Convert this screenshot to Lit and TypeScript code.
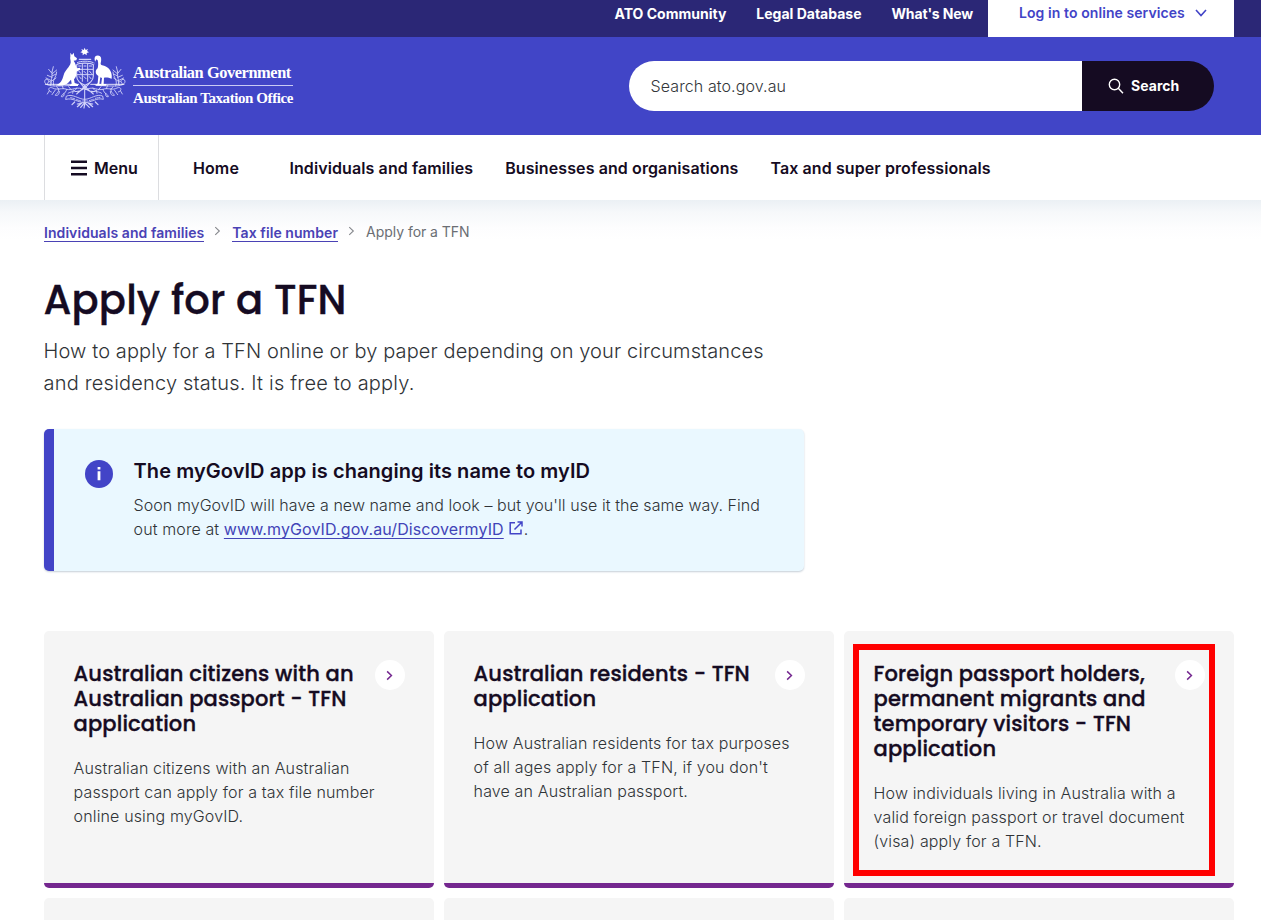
import { LitElement, html, css, svg } from "lit";
import { customElement } from "lit/decorators.js";

interface Card {
  title: string[];
  body: string[];
  boxed?: boolean;
}

const cards: Card[] = [
  {
    title: ["Australian citizens with an", "Australian passport - TFN", "application"],
    body: ["Australian citizens with an Australian", "passport can apply for a tax file number", "online using myGovID."],
  },
  {
    title: ["Australian residents - TFN", "application"],
    body: ["How Australian residents for tax purposes", "of all ages apply for a TFN, if you don't", "have an Australian passport."],
  },
  {
    title: ["Foreign passport holders,", "permanent migrants and", "temporary visitors - TFN", "application"],
    body: ["How individuals living in Australia with a", "valid foreign passport or travel document", "(visa) apply for a TFN."],
    boxed: true,
  },
];

const sprig = svg`
  <path d="M104 122C84 126 64 126 46 126C28 126 14 122 14 112C14 104 26 104 26 112M32 124C32 108 38 100 36 84M36 100L22 94M36 96L48 90M34 86L26 76M36 84L40 68M36 90L50 78M34 110L18 102M34 112L48 102M42 126C34 108 50 100 50 84M22 122C22 110 34 110 34 118" />
  <path d="M124 134C108 128 96 140 80 136C66 130 52 140 38 132C24 126 22 142 34 144M110 132C104 146 90 142 84 148M80 136C76 152 66 148 64 158C70 160 74 154 72 148M56 134C58 146 48 148 46 154C54 156 58 150 58 142M46 138L36 152M94 138L86 128M70 134L66 124M56 136L50 128M100 138L98 148M28 140L22 150" />
`;

const crest = html`
  <svg class="crest" viewBox="0 0 270 210" fill="none" stroke="#d3d4fa" stroke-width="2.6" stroke-linecap="round">
    ${sprig}
    <g transform="translate(269 0) scale(-1 1)">${sprig}</g>
    <path d="M134 124C126 140 120 140 110 150M134 124C144 140 150 140 160 150M134 126V184M122 118C132 132 148 146 166 142M148 118C136 132 122 146 104 142" stroke-width="3.2" />
    <path d="M80 156C98 148 116 166 134 166C152 166 170 148 188 156L190 166C170 160 154 176 134 176C114 176 98 160 78 166Z" />
    <path d="M92 161L104 164M110 167L122 171M128 171H142M148 170L160 166M166 163L180 160" stroke-dasharray="3 3" />
    <path d="M134 176L122 190M134 176L148 190M112 180L124 178L112 188M158 180L146 178L158 188M134 180L132 192M104 174L96 182M166 174L174 182" stroke-width="3.6" />
    <path d="M110 62C118 56 150 56 160 62V96C160 112 148 118 135 124C122 118 110 112 110 96Z" stroke-width="3.4" />
    <path d="M112 76H158M112 92H158M127 60V112M143 60V112M116 66H123M132 66H138M148 66H155M117 82L122 88M132 82L138 88M149 82L154 88M132 98L138 104M118 98L123 104M148 98L153 104M112 56C120 50 150 50 160 56" stroke-width="3" />
    <path d="M134 11L137 18L144 15L141 21L147 25L140 27L140 34L134 29L128 34L128 27L121 25L127 21L124 15L131 18Z" fill="#fff" stroke="none" />
    <path d="M118 46H152" stroke-width="4" stroke-dasharray="4 2" />
    <path d="M91 26L96 33L101 26L103 37L111 43L109 49L101 50C107 58 107 65 111 73L120 71L121 77L109 83C110 92 108 100 102 106L104 117L114 121V126H87L95 119L93 107L84 117C76 124 62 127 45 124C63 120 67 107 71 93C76 76 89 70 92 56C93 49 89 43 91 38Z" fill="#fff" stroke="none" />
    <path d="M161 66C165 57 167 55 164 48C162 38 168 34 176 35C186 36 184 50 182 58C181 65 189 63 200 69C213 77 217 91 215 104C206 101 200 99 192 101L191 120H199V125H183L186 102L181 100L178 120H183V125H166L173 118L175 96C165 90 165 79 173 73C175 65 175 56 173 49L169 46L166 52Z" fill="#fff" stroke="none" />
    <path d="M16 121H116M152 121H252" stroke="#fff" stroke-width="2.500" />
  </svg>
`;

const chevron = html`<svg class="chev" viewBox="0 0 8 12"><path d="M1.300 1.300L6.200 6L1.300 10.700" /></svg>`;

@customElement("app-root")
export class AppRoot extends LitElement {
  static styles = css`
    :host {
      display: block;
      height: 920px;
      overflow: hidden;
      background: #fff;
      color: #2f3337;
      font: 300 16px/24px Inter, "Noto Sans", sans-serif;
    }
    * { box-sizing: border-box; }
    h1, h2, h3, p { margin: 0; }
    a { color: inherit; text-decoration: none; }
    svg { display: block; flex: none; }
    .line { display: block; white-space: nowrap; }

    .top { display: flex; justify-content: flex-end; height: 37px; background: #2b2776; padding-right: 27px; color: #fff; font: 700 14px/28px Inter, sans-serif; }
    .links { display: flex; gap: 30px; padding-right: 15px; }
    .links a { white-space: nowrap; }
    .links a:last-child { letter-spacing: -0.15px; }
    .login { display: flex; width: 246px; padding-left: 31px; background: #fff; color: #4244c7; line-height: 26px; font-weight: 600; font-size: 14px; letter-spacing: 0.08px; white-space: nowrap; }
    .login svg { margin: 9px 0 0 10px; width: 12px; height: 8px; fill: none; stroke: #4244c7; stroke-width: 1.600; }

    .head { display: flex; justify-content: space-between; height: 98px; background: #4145c7; padding: 0 47px 0 40px; }
    .brand { display: flex; }
    .crest { width: 90px; height: 70px; margin-top: 7px; }
    .names { margin: 24px 0 0 3px; width: 160px; color: #fff; font: 700 16.400px/23px "Liberation Serif", serif; white-space: nowrap; }
    .gov { height: 25px; border-bottom: 1px solid #c9caf4; letter-spacing: -0.44px; }
    .office { line-height: 25px; font-size: 15px; letter-spacing: -0.42px; }
    .search { display: flex; width: 585px; height: 50px; margin-top: 24px; border-radius: 25px; overflow: hidden; }
    .field { flex: 1; background: #fff; padding-left: 21.500px; line-height: 50px; color: #33363a; letter-spacing: 0.1px; }
    .go { display: flex; align-items: center; width: 132px; padding-left: 26px; gap: 7px; background: #150b22; color: #fff; font-weight: 700; font-size: 14px; letter-spacing: 0.05px; }
    .go svg { width: 16px; height: 16px; fill: none; stroke: #fff; stroke-width: 1.400; }

    .nav { display: flex; height: 65px; padding-left: 44px; color: #150b22; font: 600 16px/66px Inter, sans-serif; letter-spacing: 0.1px; white-space: nowrap; }
    .menu { display: flex; width: 115px; border: solid #dcdde0; border-width: 0 1px; padding-left: 26px; gap: 7px; letter-spacing: 0; }
    .menu svg { width: 16px; height: 16px; margin-top: 25px; fill: #150b22; }
    .home { margin: 0 50.500px 0 34px; }
    .fam { margin-right: 32px; }
    .biz { margin-right: 32px; }

    .page { height: 720px; padding: 0 27px 0 44px; background: linear-gradient(#ebf0f4, #f6f8fa 12px, #fdfdfe 28px, #fff 40px); }
    .crumbs { display: flex; padding-top: 21px; height: 44px; font-size: 14px; line-height: 22px; white-space: nowrap; color: #6b6e73; font-weight: 400; letter-spacing: -0.04px; }
    .crumbs a { height: 20px; margin-top: 1px; color: #4a42b5; font-weight: 600; font-size: 14px; letter-spacing: 0.07px; border-bottom: 1px solid #4a42b5; }
    .crumbs .chev { width: 7px; height: 10px; margin: 5px 11px 0 10px; stroke: #85878c; stroke-width: 1.300; }
    .chev { fill: none; }
    h1 { margin: 32px 0 0 -0.500px; height: 48px; color: #150b22; font: 500 40px/49px Poppins, Inter, sans-serif; letter-spacing: 0.17px; -webkit-text-stroke: 0.400px #150b22; white-space: nowrap; }
    .lead { margin: 11px 0 0 -0.400px; font-size: 20px; line-height: 32px; letter-spacing: 0.1px; }
    .lead .line:last-child { letter-spacing: 0.19px; }
    .notice { display: flex; width: 760px; height: 142px; margin-top: 30px; border-left: 10px solid #4244c7; border-radius: 5px; background: #eaf8ff; box-shadow: 0 1px 2px #c5ced7; padding: 28px 0 0 31px; letter-spacing: 0.065px; }
    .notice > svg { width: 28px; height: 28px; margin: 3px 20.600px 0 0; }
    .notice .line:last-child { letter-spacing: 0.11px; }
    h2 { height: 28px; margin-bottom: 8px; color: #150b22; font: 600 20px/28px Inter, sans-serif; white-space: nowrap; }
    .ext { color: #4244b8; font-weight: 400; text-decoration: underline; text-underline-offset: 3px; text-decoration-thickness: 1px; }
    .out { display: inline-block; width: 14px; height: 14px; margin: 0 1px 0 5px; vertical-align: 0; fill: none; stroke: #4244c7; stroke-width: 1.500; }

    .grid { display: grid; grid-template-columns: repeat(3, 390px); grid-template-rows: 257px 120px; gap: 10px; margin-top: 60px; }
    .card { position: relative; display: flex; justify-content: space-between; padding: 30px 29px 0 29.600px; border-radius: 5px; border-bottom: 5px solid #74278f; background: #f5f5f5; }
    h3 { color: #150b22; font: 500 21px/25px Poppins, Inter, sans-serif; -webkit-text-stroke: 0.350px #150b22; margin-bottom: 20px; }
    .copy { width: 0; letter-spacing: 0.14px; }
    .disc { display: grid; place-items: center; width: 30px; height: 30px; margin-top: -1px; border-radius: 50%; background: #fff; }
    .disc .chev { width: 7px; height: 11px; margin-right: 1px; stroke: #74278f; stroke-width: 1.700; }
    .mark { position: absolute; left: 9px; top: 13px; width: 362px; height: 232px; border: 6px solid #f00; }
  `;

  private card(c: Card) {
    return html`
      <article class="card">
        <div class="copy">
          <h3>${c.title.map((t) => html`<span class="line">${t}</span>`)}</h3>
          <p>${c.body.map((t) => html`<span class="line">${t}</span>`)}</p>
        </div>
        <span class="disc">${chevron}</span>
        ${c.boxed ? html`<span class="mark"></span>` : null}
      </article>
    `;
  }

  render() {
    return html`
      <div class="top">
        <div class="links"><a>ATO Community</a><a>Legal Database</a><a>What's New</a></div>
        <a class="login">Log in to online services<svg viewBox="0 0 12 8"><path d="M1 1L6 6.500L11 1" /></svg></a>
      </div>
      <header class="head">
        <div class="brand">
          ${crest}
          <div class="names"><div class="gov">Australian Government</div><div class="office">Australian Taxation Office</div></div>
        </div>
        <div class="search">
          <div class="field">Search ato.gov.au</div>
          <div class="go"><svg viewBox="0 0 16 16"><circle cx="6.500" cy="6.500" r="5.200" /><path d="M10.300 10.300L15 15.300" /></svg>Search</div>
        </div>
      </header>
      <nav class="nav">
        <a class="menu"><svg viewBox="0 0 16 16"><path d="M0 .5h16v2.400H0zM0 6.800h16v2.400H0zM0 13h16v2.400H0z" /></svg>Menu</a>
        <a class="home">Home</a><a class="fam">Individuals and families</a><a class="biz">Businesses and organisations</a><a>Tax and super professionals</a>
      </nav>
      <main class="page">
        <div class="crumbs"><a>Individuals and families</a>${chevron}<a>Tax file number</a>${chevron}<span>Apply for a TFN</span></div>
        <h1>Apply for a TFN</h1>
        <p class="lead">
          <span class="line">How to apply for a TFN online or by paper depending on your circumstances</span>
          <span class="line">and residency status. It is free to apply.</span>
        </p>
        <section class="notice">
          <svg viewBox="0 0 28 28"><circle cx="14" cy="14" r="14" fill="#4244c7" /><path d="M12.600 7h2.800v2.600h-2.800zM12.600 11.200h2.800v9h-2.800z" fill="#fff" /></svg>
          <div>
            <h2>The myGovID app is changing its name to myID</h2>
            <p>
              <span class="line">Soon myGovID will have a new name and look – but you'll use it the same way. Find</span>
              <span class="line">out more at <a class="ext">www.myGovID.gov.au/DiscovermyID</a><svg class="out" viewBox="0 0 14 14"><path d="M6 1.700H1.200V12.800H12V8.500M8.500 1H13V5.500M13 1L5.500 8.500" /></svg>.</span>
            </p>
          </div>
        </section>
        <div class="grid">
          ${cards.map((c) => this.card(c))}
          <article class="card"></article><article class="card"></article><article class="card"></article>
        </div>
      </main>
    `;
  }
}
